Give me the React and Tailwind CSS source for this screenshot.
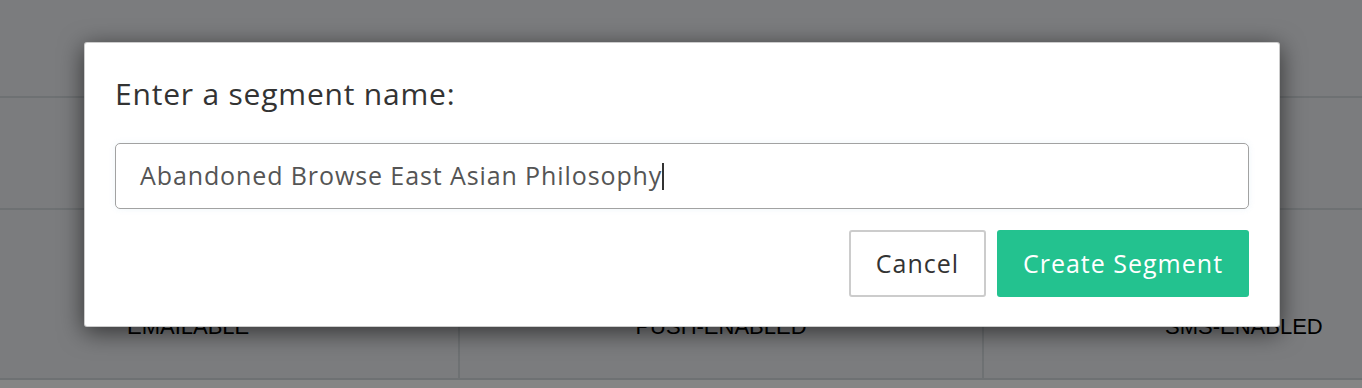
import React from "react";

const App = () => {
    return (
        <div className="relative h-[388px] w-full overflow-hidden bg-[#eceef2] font-['Liberation_Sans',Arial,sans-serif]">
            <div className="h-[98px] border-b-2 border-[#d3d9dd]"></div>
            <div className="h-[112px] border-b-2 border-[#d3d9dd]"></div>
            <div className="flex h-[170px] border-b-2 border-[#d3d9dd]">
                <div className="w-[460px] border-r-2 border-[#d3d9dd] pl-[127px] pt-[104px] text-[22px] leading-[26px] text-black">EMAILABLE</div>
                <div className="flex w-[524px] justify-center border-r-2 border-[#d3d9dd] pt-[104px] text-[22px] leading-[26px] text-black">PUSH-ENABLED</div>
                <div className="flex-1 pl-[181px] pt-[104px] text-[22px] leading-[26px] text-black">SMS-ENABLED</div>
            </div>
            <div className="h-full bg-white"></div>

            {/* backdrop + modal */}
            <div className="absolute inset-0 bg-black/[0.48]"></div>
            <div className="absolute left-[84px] top-[42px] w-[1196px] rounded-[3px] border border-black/20 bg-white px-[30px] pb-[29px] pt-[32px] font-['Open_Sans',sans-serif] shadow-[0_5px_24px_rgba(0,0,0,0.6)]">
                <h2 className="text-[30px] leading-[38px] tracking-[0.8px] text-[#333]">Enter a segment name:</h2>
                <div className="mt-[30px] flex h-[66px] items-center rounded-[5px] border-[1.5px] border-[#a2a2a2] pl-[24px] text-[25px] tracking-[0.9px] text-[#555] shadow-[0_0_6px_rgba(120,180,220,0.12)]">
                    <span>Abandoned Browse East Asian Philosophy</span>
                    <span className="h-[27px] w-[2px] bg-[#333]"></span>
                </div>
                <div className="mt-[21px] flex justify-end gap-[11px]">
                    <button className="h-[67px] w-[137px] rounded-[3px] border-2 border-[#ccc] bg-white text-[25px] tracking-[1px] text-[#333]">Cancel</button>
                    <button className="h-[67px] w-[252px] rounded-[3px] bg-[#23c28f] text-[25px] tracking-[1px] text-white">Create Segment</button>
                </div>
            </div>
        </div>
    );
};

export default App;
